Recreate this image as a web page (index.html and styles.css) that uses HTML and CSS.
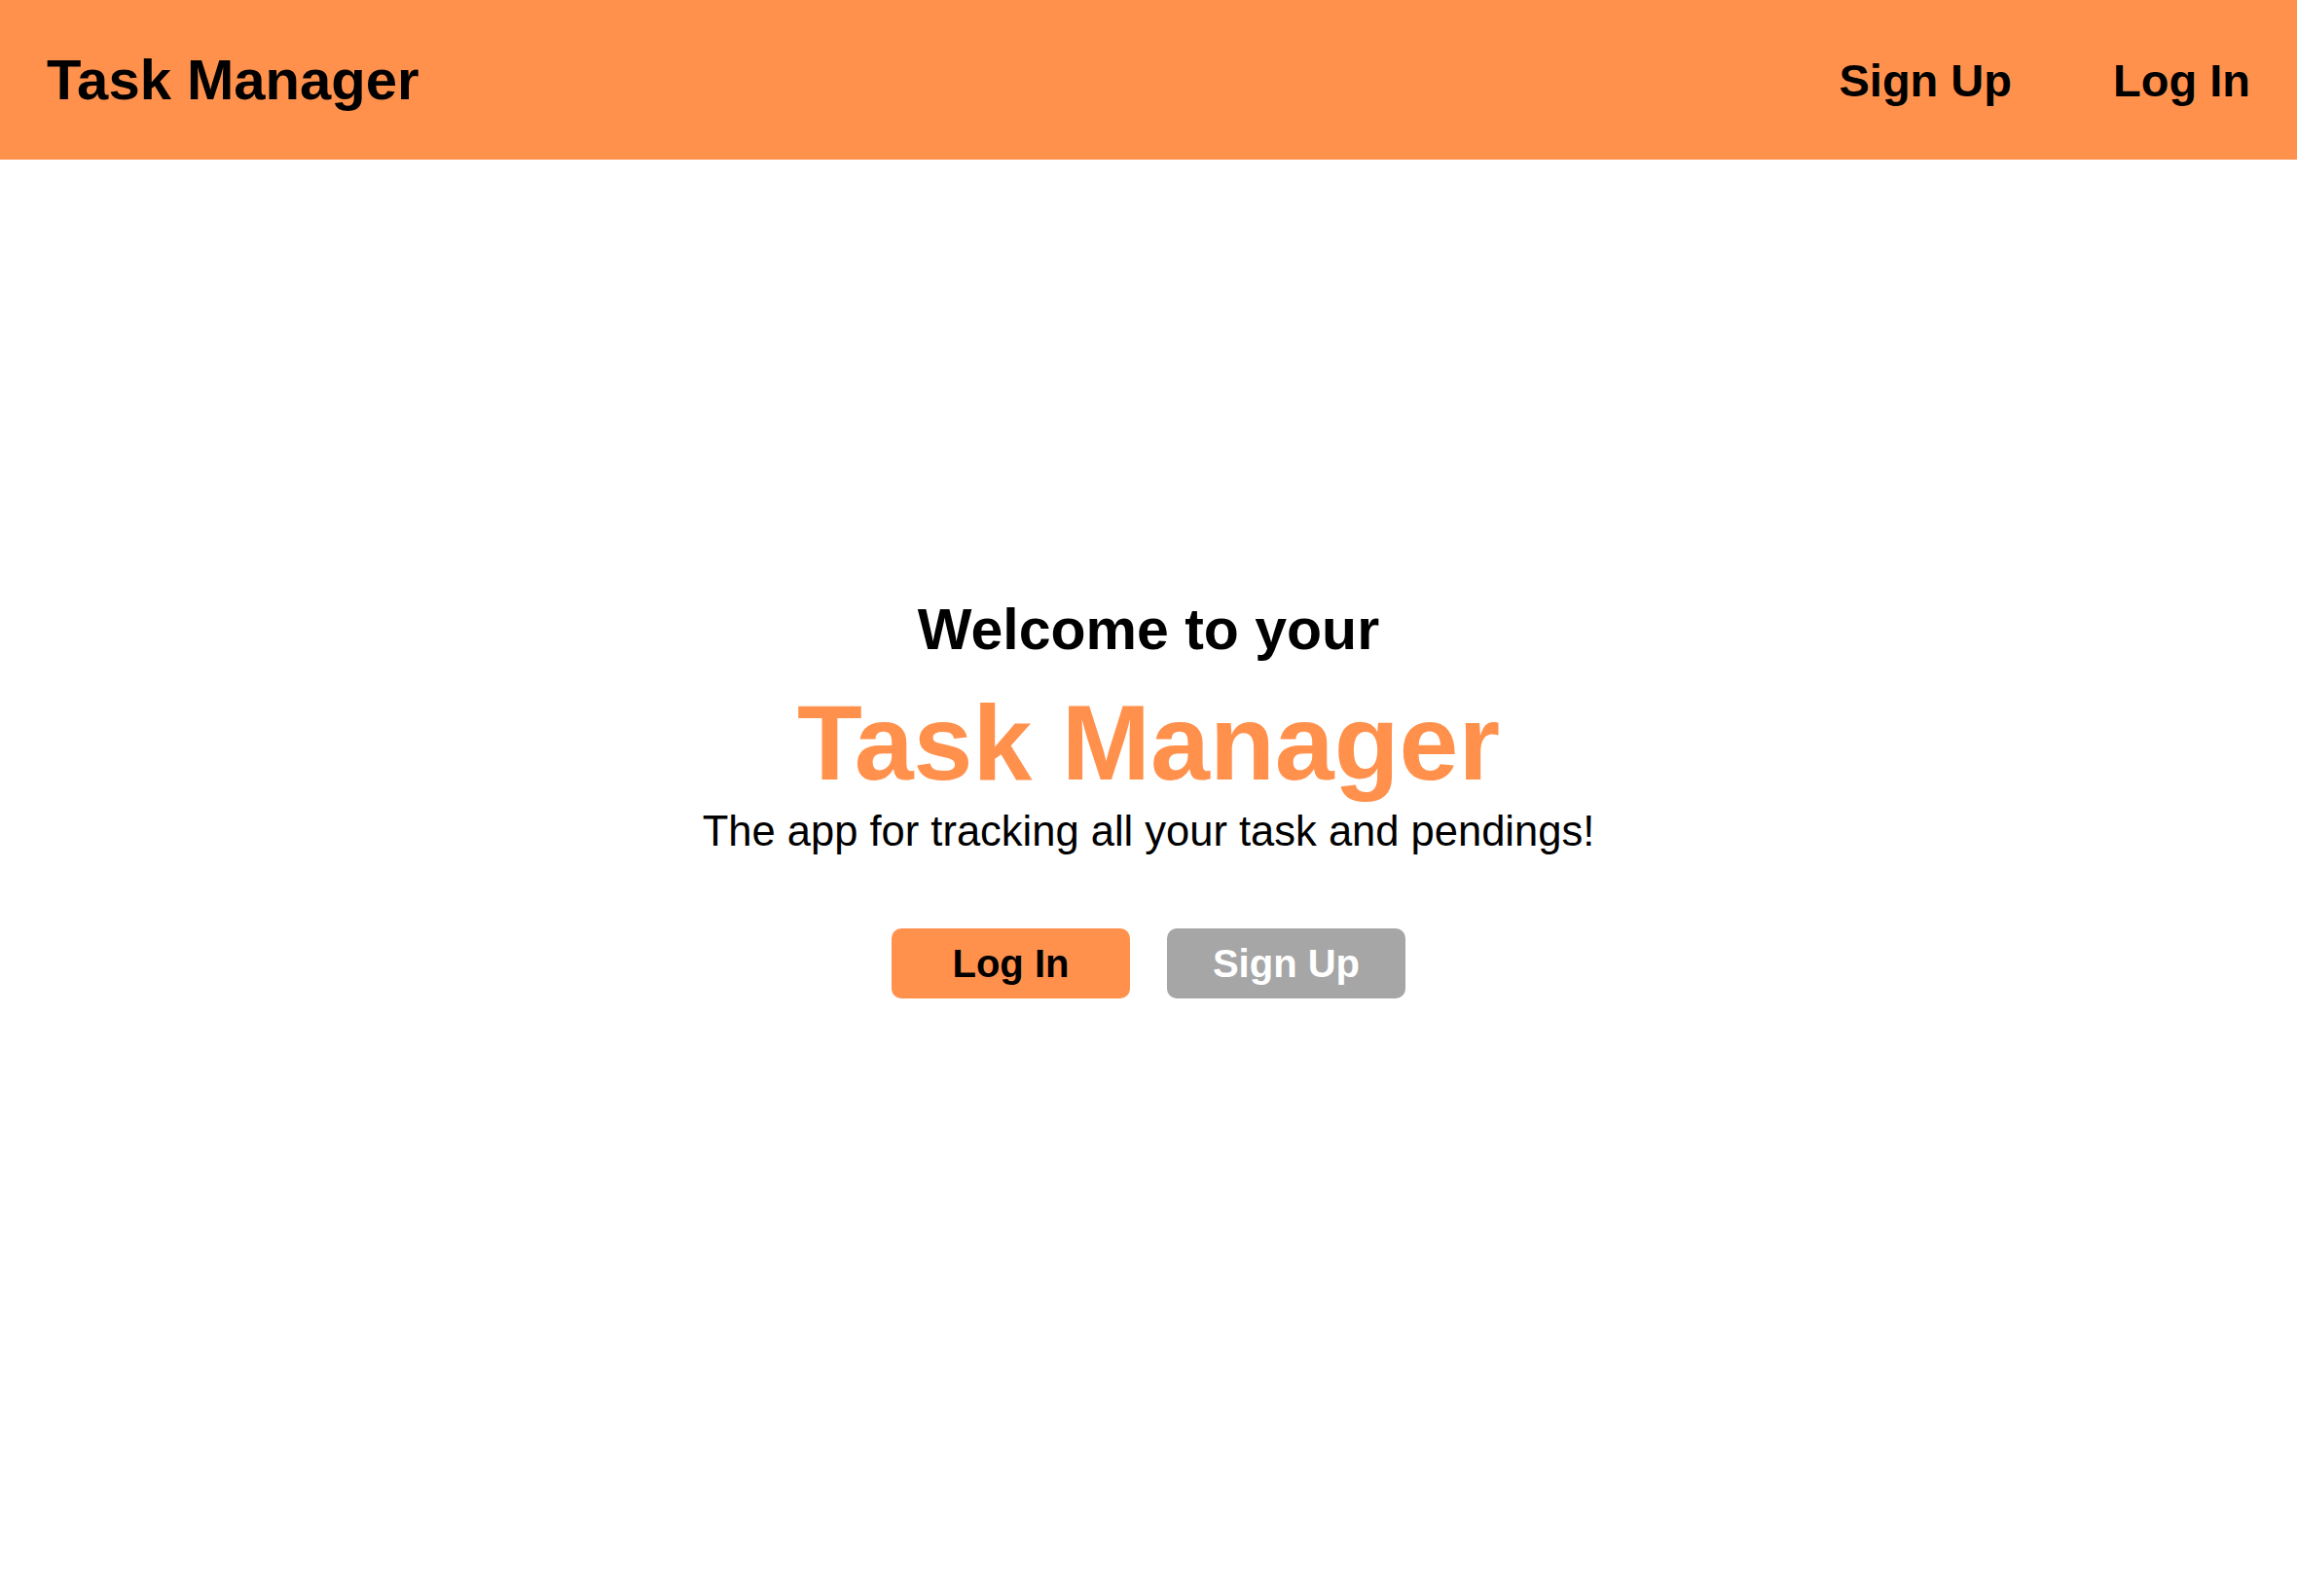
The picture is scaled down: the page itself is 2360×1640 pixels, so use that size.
FILE: index.html
```html
<!DOCTYPE html>
<html lang="en">
<head>
<meta charset="utf-8">
<title>Task Manager</title>
<link rel="stylesheet" href="styles.css">
</head>
<body>
<header class="topbar">
  <div class="brand">Task Manager</div>
  <nav class="nav">
    <a class="nav-link" href="#">Sign Up</a>
    <a class="nav-link" href="#">Log In</a>
  </nav>
</header>
<main class="hero">
  <div class="hero-inner">
    <h2 class="welcome">Welcome to your</h2>
    <h1 class="title">Task Manager</h1>
    <p class="subtitle">The app for tracking all your task and pendings!</p>
    <div class="actions">
      <button class="btn btn-primary">Log In</button>
      <button class="btn btn-secondary">Sign Up</button>
    </div>
  </div>
</main>
</body>
</html>
```
FILE: styles.css
```css
html, body {
  margin: 0;
  padding: 0;
  height: 100%;
}
body {
  font-family: "Liberation Sans", Arial, sans-serif;
  color: #000;
  background: #fff;
  display: flex;
  flex-direction: column;
  min-height: 1640px;
}
.topbar {
  height: 164px;
  flex: 0 0 164px;
  background: #ff914d;
  display: flex;
  align-items: center;
  justify-content: space-between;
  padding: 0 48px;
  box-sizing: border-box;
}
.brand {
  font-size: 58px;
  font-weight: 700;
  line-height: 1;
}
.nav {
  display: flex;
  gap: 104px;
}
.nav-link {
  font-size: 47px;
  font-weight: 700;
  color: #000;
  text-decoration: none;
  line-height: 1;
}
.hero {
  flex: 1;
  display: flex;
  flex-direction: column;
  justify-content: center;
  align-items: center;
  padding-bottom: 160px;
}
.hero-inner {
  display: flex;
  flex-direction: column;
  align-items: center;
}
.welcome {
  margin: 0;
  font-size: 59px;
  font-weight: 700;
  line-height: 1;
}
.title {
  margin: 32px 0 0;
  font-size: 109.5px;
  font-weight: 700;
  line-height: 1;
  color: #ff914d;
}
.subtitle {
  margin: 14px 0 0;
  font-size: 43.5px;
  line-height: 1;
}
.actions {
  margin-top: 78px;
  display: flex;
  gap: 38px;
}
.btn {
  width: 245px;
  height: 72px;
  border: none;
  border-radius: 10px;
  font-family: "Liberation Sans", Arial, sans-serif;
  font-size: 40px;
  font-weight: 700;
  padding: 0;
  cursor: pointer;
}
.btn-primary {
  background: #ff914d;
  color: #000;
}
.btn-secondary {
  background: #a6a6a6;
  color: #fff;
}
```
